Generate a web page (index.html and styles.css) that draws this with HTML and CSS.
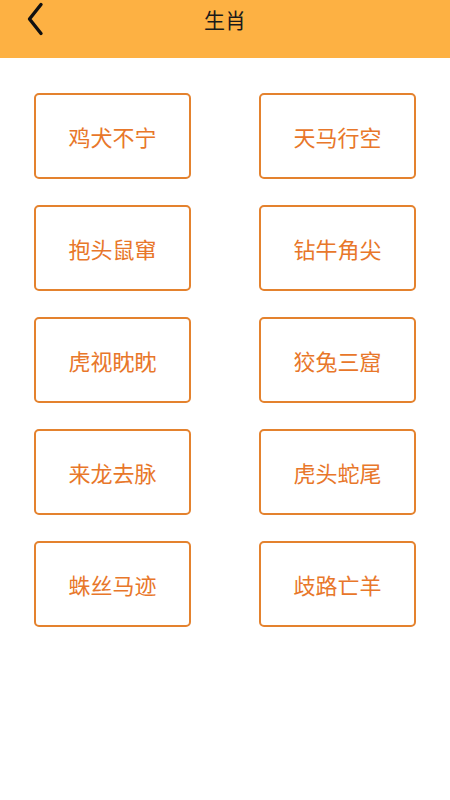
FILE: index.html
```html
<!DOCTYPE html>
<html lang="zh">
<head>
<meta charset="utf-8">
<title>生肖</title>
<link rel="stylesheet" href="styles.css">
</head>
<body>
<header class="topbar">
  <span class="back">
    <svg width="18" height="34" viewBox="0 0 18 34"><path d="M15 2.5 L3.5 17 L15 31.5" fill="none" stroke="#111" stroke-width="3.4" stroke-linecap="round" stroke-linejoin="round"/></svg>
  </span>
  <h1 class="title">生肖</h1>
</header>
<main class="grid">
  <div class="card">鸡犬不宁</div>
  <div class="card">天马行空</div>
  <div class="card">抱头鼠窜</div>
  <div class="card">钻牛角尖</div>
  <div class="card">虎视眈眈</div>
  <div class="card">狡兔三窟</div>
  <div class="card">来龙去脉</div>
  <div class="card">虎头蛇尾</div>
  <div class="card">蛛丝马迹</div>
  <div class="card">歧路亡羊</div>
</main>
</body>
</html>
```
FILE: styles.css
```css
html, body {
  margin: 0;
  padding: 0;
  background: #fff;
  font-family: "Noto Sans CJK SC", "Noto Sans", sans-serif;
}
.topbar {
  position: relative;
  height: 58px;
  background: #fdb143;
  display: flex;
  align-items: flex-start;
  justify-content: center;
}
.back {
  position: absolute;
  left: 26px;
  top: 2px;
  width: 18px;
  height: 34px;
}
.back svg { display: block; }
.title {
  margin: 0;
  padding-top: 4px;
  font-size: 21px;
  font-weight: 400;
  line-height: 30px;
  color: #1a1a1a;
}
.grid {
  display: grid;
  grid-template-columns: 157px 157px;
  grid-auto-rows: 86px;
  column-gap: 68px;
  row-gap: 26px;
  padding: 35px 34px 0 34px;
}
.card {
  box-sizing: border-box;
  border: 2px solid #e4822e;
  border-radius: 5px;
  display: flex;
  align-items: center;
  justify-content: center;
  color: #e8772a;
  font-size: 22px;
  line-height: 1;
}
```
